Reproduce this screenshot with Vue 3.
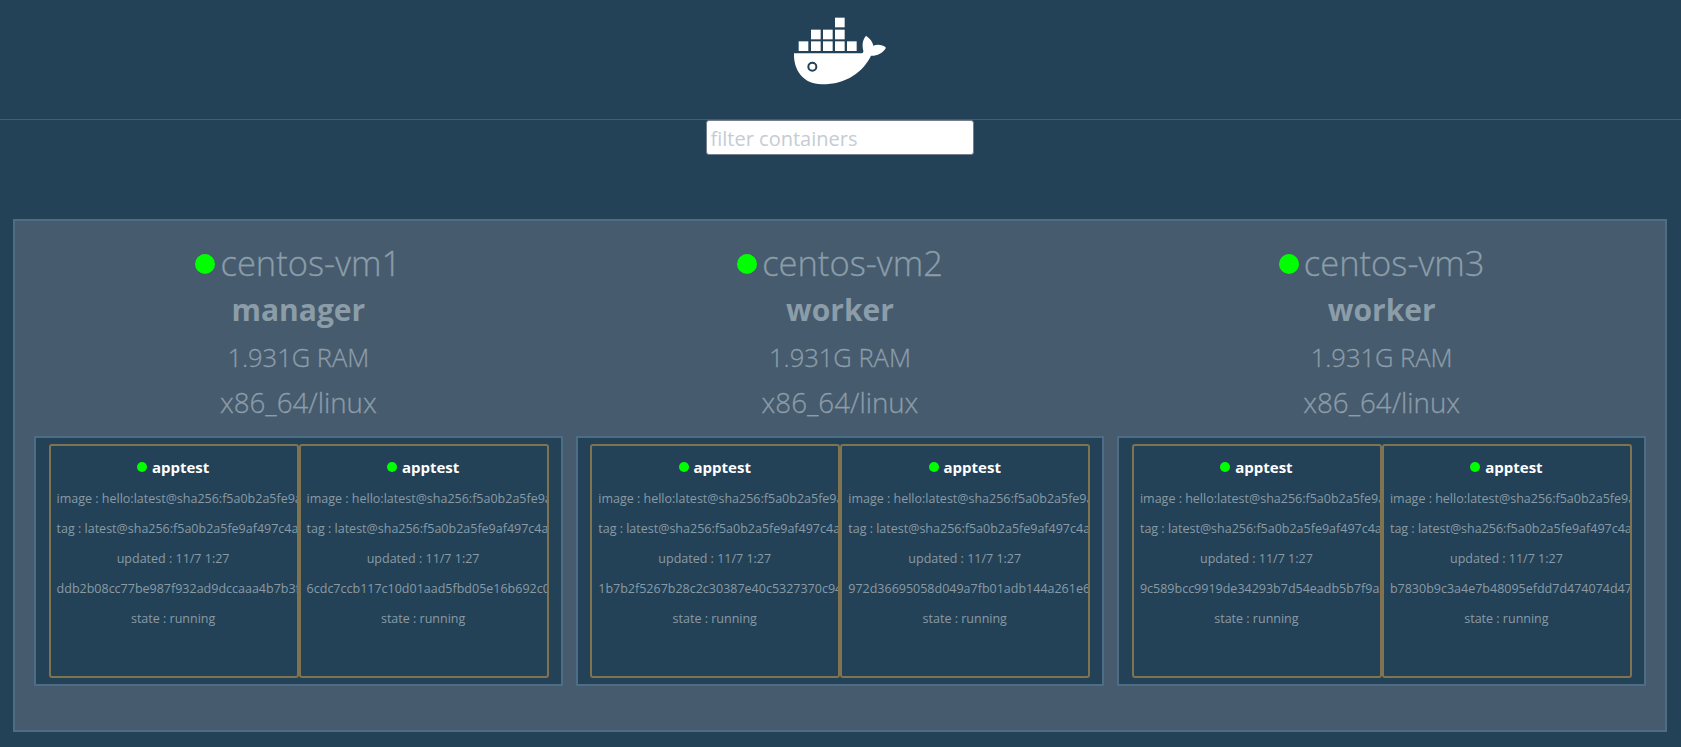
<template>
  <div class="page">
    <header class="top">
      <svg class="logo" viewBox="0 0 480 300" width="160" height="100">
        <rect v-for="(b, i) in blocks" :key="i" :x="b[0]" :y="b[1]" width="29" height="29" fill="#fff" />
        <path
          fill="#fff"
          d="M102 160H303C308 160 311 157 310 152C306 135 307 120 318 107C330 115 338 125 340 137C352 132 368 134 378 143C368 160 350 168 333 167C310 215 260 253 185 253C130 253 100 210 102 160Z"
        />
        <circle cx="157" cy="200" r="12" fill="#fff" stroke="#234257" stroke-width="6" />
      </svg>
    </header>
    <div class="filter">
      <input type="text" placeholder="filter containers" />
    </div>
    <section class="cluster">
      <div v-for="node in nodes" :key="node.name" class="node">
        <div class="node-info">
          <h1><span class="dot"></span>{{ node.name }}</h1>
          <h2>{{ node.role }}</h2>
          <h3>1.931G RAM</h3>
          <h4>x86_64/linux</h4>
        </div>
        <div class="tasks">
          <div v-for="id in node.ids" :key="id" class="task">
            <div class="task-name"><span class="dot-small"></span>apptest</div>
            <p>image : hello:latest@sha256:f5a0b2a5fe9af497c4a7c186ef6412bb91ff19d39d6ac24a4997eaed2b0bb334</p>
            <p>tag : latest@sha256:f5a0b2a5fe9af497c4a7c186ef6412bb91ff19d39d6ac24a4997eaed2b0bb334</p>
            <p>updated : 11/7 1:27</p>
            <p>{{ id }}</p>
            <p>state : running</p>
          </div>
        </div>
      </div>
    </section>
  </div>
</template>

<script setup>
const blocks = [
  [116, 124], [153, 124], [189, 124], [225, 124], [261, 124],
  [153, 89], [189, 89], [225, 89],
  [225, 53],
];

const nodes = [
  {
    name: "centos-vm1",
    role: "manager",
    ids: ["ddb2b08cc77be987f932ad9dccaaa4b7b3f1e6a0c25d", "6cdc7ccb117c10d01aad5fbd05e16b692c0a41f7d38e"],
  },
  {
    name: "centos-vm2",
    role: "worker",
    ids: ["1b7b2f5267b28c2c30387e40c5327370c94e1ad06f2b", "972d36695058d049a7fb01adb144a261e6c8d30f57ab"],
  },
  {
    name: "centos-vm3",
    role: "worker",
    ids: ["9c589bcc9919de34293b7d54eadb5b7f9a3c06e1d2f4", "b7830b9c3a4e7b48095efdd7d474074d47a1c5e92f08"],
  },
];
</script>

<style>
body {
  background: #234257;
}
</style>

<style scoped>
.page {
  font-family: "Open Sans", "Liberation Sans", sans-serif;
  height: 747px;
  overflow: hidden;
}
.top {
  height: 119px;
  border-bottom: 1px solid #3f5f75;
  display: flex;
  justify-content: center;
  padding-right: 1px;
}
.logo {
  display: block;
}
.filter {
  display: flex;
  justify-content: center;
  padding-right: 2px;
}
.filter input {
  box-sizing: border-box;
  width: 268px;
  height: 35px;
  border: 1px solid #767e8e;
  border-radius: 3px;
  padding: 2px 4px 0;
  background: #fff;
  font-family: inherit;
  font-size: 20px;
  outline: none;
}
.filter input::placeholder {
  color: #c5ccd3;
  opacity: 1;
}
.cluster {
  box-sizing: border-box;
  margin: 64px 14px 0 13px;
  height: 513px;
  padding: 0 19px;
  border: 2px solid #4d6d84;
  background: #465b6d;
  display: grid;
  grid-template-columns: repeat(3, 1fr);
  column-gap: 13px;
}
.node {
  min-width: 0;
}
.node-info {
  color: #8c9daa;
  text-align: center;
  height: 215px;
}
.node-info h1,
.node-info h2,
.node-info h3,
.node-info h4 {
  margin: 0;
}
.node-info h1 {
  font-size: 34.5px;
  font-weight: 300;
  -webkit-text-stroke: 0.3px #8c9daa;
  line-height: 44px;
  padding-top: 20px;
  display: flex;
  justify-content: center;
  align-items: center;
}
.node-info h2 {
  font-size: 30px;
  font-weight: 700;
  line-height: 48px;
  padding-top: 1px;
}
.node-info h3 {
  font-size: 25.5px;
  font-weight: 300;
  -webkit-text-stroke: 0.3px #8c9daa;
  line-height: 46px;
}
.node-info h4 {
  font-size: 27.7px;
  font-weight: 300;
  -webkit-text-stroke: 0.3px #8c9daa;
  line-height: 44px;
}
.dot {
  width: 20px;
  height: 20px;
  border-radius: 50%;
  background: #00ff00;
  margin-right: 5px;
  position: relative;
  top: 1px;
}
.tasks {
  box-sizing: border-box;
  height: 250px;
  border: 2px solid #4d6d84;
  background: #234257;
  padding: 6px 12.6px;
  display: flex;
}
.task {
  box-sizing: border-box;
  flex: 0 0 250px;
  height: 234px;
  border: 2px solid #7f7350;
  border-radius: 3px;
  overflow: hidden;
  text-align: center;
  color: #8a9aa6;
  font-size: 12.5px;
  padding: 0 7px 0 6px;
}
.task-name {
  color: #fff;
  font-size: 15px;
  font-weight: 700;
  line-height: 20px;
  margin-top: 11px;
  display: flex;
  justify-content: center;
  align-items: center;
}
.dot-small {
  width: 10px;
  height: 10px;
  border-radius: 50%;
  background: #00ff00;
  margin-right: 5px;
}
.task p {
  margin: 0;
  line-height: 30px;
  white-space: nowrap;
}
.task-name + p {
  margin-top: 7px;
}
</style>
